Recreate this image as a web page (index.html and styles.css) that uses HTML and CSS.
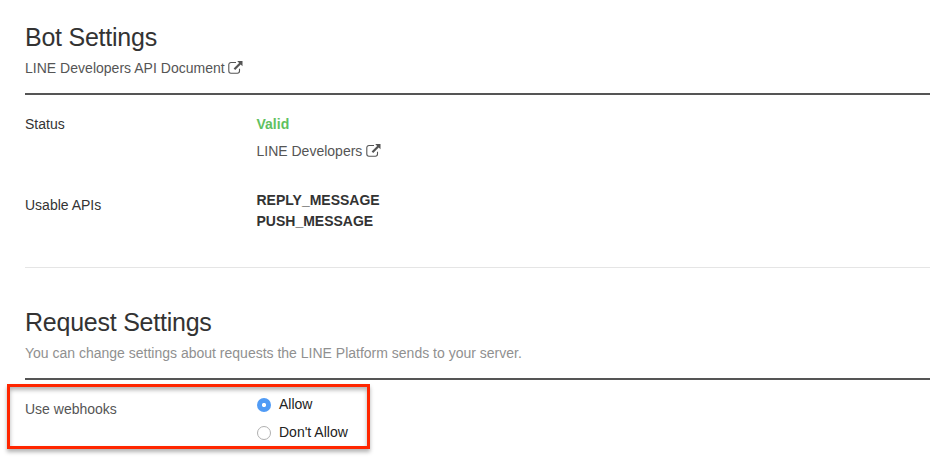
FILE: index.html
```html
<!DOCTYPE html>
<html lang="en">
<head>
<meta charset="utf-8">
<title>Bot Settings</title>
<link rel="stylesheet" href="styles.css">
</head>
<body>
<svg class="defs" width="0" height="0">
  <symbol id="external" viewBox="0 0 15 13">
    <path d="M8 1.500H3A2.200 2.200 0 0 0 .8 3.700v6.300A2.200 2.200 0 0 0 3 12.200h6.300A2.200 2.200 0 0 0 11.500 10V7.800" fill="none" stroke="currentColor" stroke-width="1.100"/>
    <path d="M9.200 0H14.500V5.300L12.700 3.500L7.200 9L5.600 7.400L11.100 1.900Z" fill="currentColor"/>
  </symbol>
</svg>
<main class="page">
  <section class="section bot">
    <h2 class="title">Bot Settings</h2>
    <p class="lead"><a class="link doc">LINE Developers API Document</a><svg class="icon"><use href="#external"/></svg></p>
    <div class="row status">
      <div class="label">Status</div>
      <div class="value">
        <div class="valid">Valid</div>
        <div class="dev"><a class="link devs">LINE Developers</a><svg class="icon"><use href="#external"/></svg></div>
      </div>
    </div>
    <div class="row apis">
      <div class="label usable">Usable APIs</div>
      <div class="value names"><div>REPLY_MESSAGE</div><div>PUSH_MESSAGE</div></div>
    </div>
  </section>
  <section class="section request">
    <h2 class="title">Request Settings</h2>
    <p class="lead muted">You can change settings about requests the LINE Platform sends to your server.</p>
    <div class="row webhooks">
      <div class="label hooks">Use webhooks</div>
      <div class="value options">
        <label class="option"><span class="radio checked"></span><span>Allow</span></label>
        <label class="option"><span class="radio"></span><span>Don't Allow</span></label>
      </div>
      <div class="highlight"></div>
    </div>
  </section>
</main>
</body>
</html>
```
FILE: styles.css
```css
* { box-sizing: border-box; }
body { margin: 0; background: #fff; color: #333; font: 14px/21px "Liberation Sans", Arial, sans-serif; height: 462px; overflow: hidden; }
.defs { position: absolute; }
.page { padding: 0 10px 0 25px; }
.title { margin: 0; font-size: 25px; letter-spacing: -.24px; font-weight: 400; line-height: 34px; color: #333; }
.bot { height: 268px; padding-top: 20px; border-bottom: 1px solid #e5e5e5; }
.request { padding-top: 37px; }
.lead { margin: 0; height: 41px; padding-top: 4px; border-bottom: 2px solid #555; color: #555; display: flex; }
.doc { letter-spacing: .02px; }
.muted { color: #909090; }
.icon { width: 15px; height: 13px; margin: 3px 0 0 3.500px; flex: none; color: #555; }
.row { display: flex; }
.label { width: 231.500px; flex: none; }
.status { padding-top: 19px; }
.valid { color: #5fc15f; font-weight: 700; }
.dev { display: flex; margin-top: 6px; color: #555; }
.apis { padding-top: 28px; }
.usable { padding-top: 5px; }
.names { font-weight: 700; }
.webhooks { position: relative; padding-top: 14px; }
.hooks { width: 231px; padding-top: 5px; color: #555; }
.option { display: flex; align-items: center; height: 21px; margin-bottom: 7px; color: #222; }
.radio { width: 14px; height: 14px; margin: 0 8px 0 1px; border: 1px solid #b0b0b0; border-radius: 50%; background: #fff; }
.checked { border: 0; background: radial-gradient(circle, #fff 0 1.800px, #509bf5 2.400px); }
.highlight { position: absolute; left: -18px; top: 4px; width: 363px; height: 65px; border: 3px solid #ff2600; box-shadow: 0 3px 4px rgba(0,0,0,.3), inset 0 3px 4px rgba(0,0,0,.3); pointer-events: none; }
```
